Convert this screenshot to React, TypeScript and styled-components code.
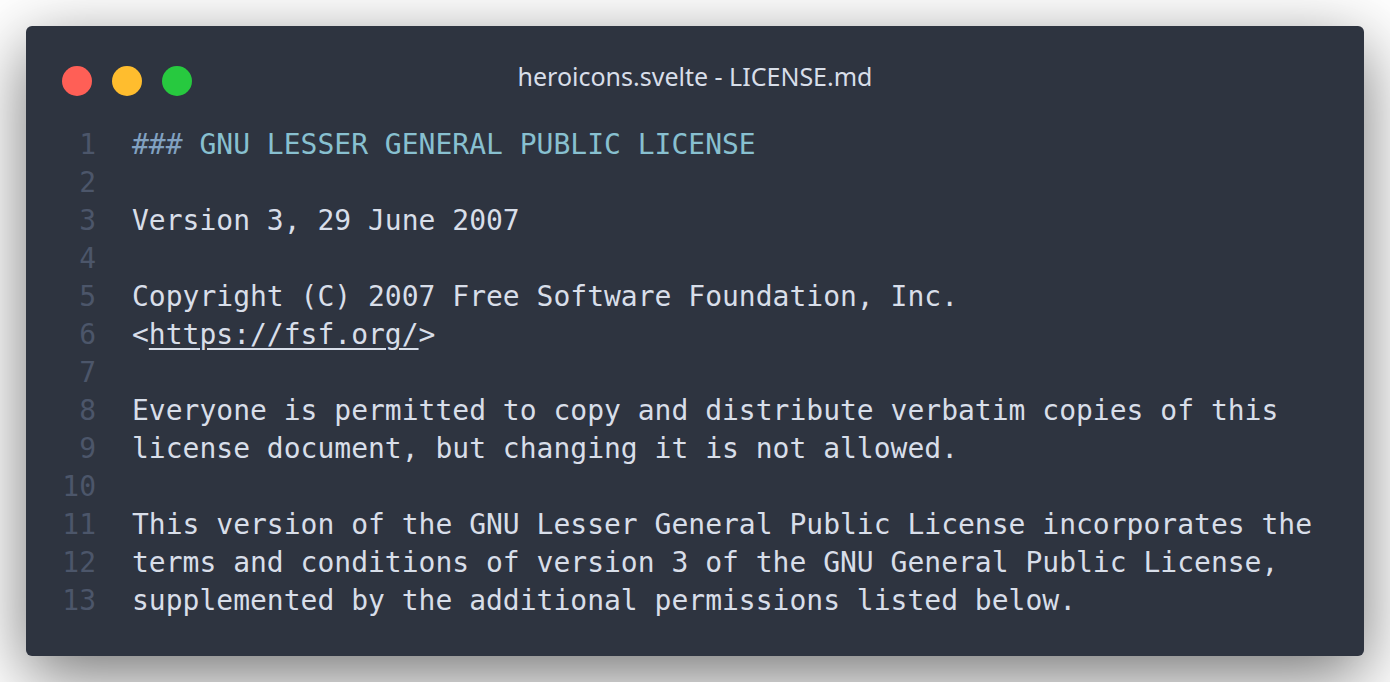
import React from "react";
import styled, { createGlobalStyle } from "styled-components";

const Global = createGlobalStyle`
  html, body { margin: 0; padding: 0; background: #ffffff; }
  body { font-family: "Noto Sans", sans-serif; }
`;

const Page = styled.div`
  padding: 26px;
  box-sizing: border-box;
  width: 1390px;
  height: 682px;
`;

const Window = styled.div`
  width: 1338px;
  height: 630px;
  box-sizing: border-box;
  background: #2e3440;
  border-radius: 6px;
  box-shadow: 0 20px 68px rgba(0, 0, 0, 0.55);
  padding: 40px 36px 37px 36px;
  display: flex;
  flex-direction: column;
`;

const TitleBar = styled.div`
  position: relative;
  display: flex;
  align-items: center;
  height: 30px;
`;

const Dots = styled.div`
  display: flex;
  gap: 20px;
`;

const Dot = styled.span<{ $color: string }>`
  width: 30px;
  height: 30px;
  border-radius: 50%;
  background: ${(p) => p.$color};
  display: block;
`;

const Title = styled.div`
  position: absolute;
  left: 0;
  right: 0;
  top: -5px;
  text-align: center;
  font-family: "Noto Sans", "Open Sans", sans-serif;
  font-size: 25px;
  line-height: 30px;
  color: #d8dee9;
  pointer-events: none;
`;

const Code = styled.div`
  margin-top: 30px;
  display: grid;
  grid-template-columns: 34px 1fr;
  column-gap: 36px;
  font-family: "DejaVu Sans Mono", monospace;
  font-size: 28px;
  line-height: 38px;
  color: #d8dee9;
`;

const LineNo = styled.div`
  text-align: right;
  color: #4c566a;
`;

const LineText = styled.div`
  white-space: pre;
`;

const Hash = styled.span`
  color: #81a1c1;
`;

const Heading = styled.span`
  color: #88c0d0;
`;

const Link = styled.span`
  text-decoration: underline;
  text-underline-offset: 4px;
  text-decoration-thickness: 2px;
`;

const lines: React.ReactNode[] = [
  <>
    <Hash>###</Hash>
    <Heading> GNU LESSER GENERAL PUBLIC LICENSE</Heading>
  </>,
  "",
  "Version 3, 29 June 2007",
  "",
  "Copyright (C) 2007 Free Software Foundation, Inc.",
  <>
    {"<"}
    <Link>https://fsf.org/</Link>
    {">"}
  </>,
  "",
  "Everyone is permitted to copy and distribute verbatim copies of this",
  "license document, but changing it is not allowed.",
  "",
  "This version of the GNU Lesser General Public License incorporates the",
  "terms and conditions of version 3 of the GNU General Public License,",
  "supplemented by the additional permissions listed below.",
];

export default function App() {
  return (
    <Page>
      <Global />
      <Window>
        <TitleBar>
          <Dots>
            <Dot $color="#ff5f56" />
            <Dot $color="#ffbd2e" />
            <Dot $color="#27c93f" />
          </Dots>
          <Title>heroicons.svelte - LICENSE.md</Title>
        </TitleBar>
        <Code>
          {lines.map((l, i) => (
            <React.Fragment key={i}>
              <LineNo>{i + 1}</LineNo>
              <LineText>{l === "" ? " " : l}</LineText>
            </React.Fragment>
          ))}
        </Code>
      </Window>
    </Page>
  );
}
